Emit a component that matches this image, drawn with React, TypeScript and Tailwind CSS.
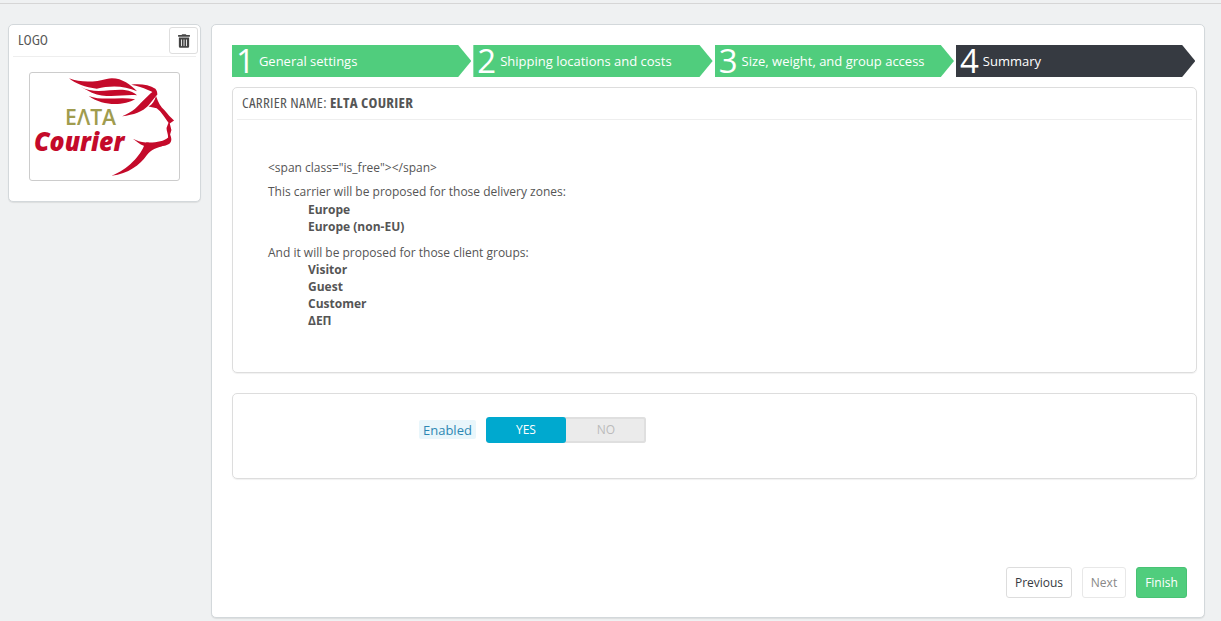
import * as React from "react";
import { FaTrashAlt } from "react-icons/fa";

const steps = [
  { num: "1", label: "General settings", done: true },
  { num: "2", label: "Shipping locations and costs", done: true },
  { num: "3", label: "Size, weight, and group access", done: true },
  { num: "4", label: "Summary", done: false },
];

const zones = ["Europe", "Europe (non-EU)"];
const groups = ["Visitor", "Guest", "Customer", "ΔΕΠ"];

const EltaLogo = () => (
  <svg viewBox="12 12 453 327" className="block w-full h-full">
    <g fill="#c40a2a">
      <path d="M130 28 C165 42 210 40 245 30 C285 22 315 45 338 68 C300 50 255 50 215 60 C180 55 150 45 130 28 Z" />
      <path d="M165 54 C205 78 260 60 300 64 C318 66 330 72 338 80 C295 76 250 92 200 72 Z" />
      <path d="M190 82 C230 98 285 84 332 92 C300 110 238 116 190 82 Z" />
      <path d="M320 48 C345 44 375 48 394 60 C398 65 400 70 400 78 C385 70 360 56 320 48 Z" />
      <path d="M390 66 C375 76 366 88 350 103 C335 120 318 135 292 144 C328 140 355 130 372 112 C382 100 392 88 400 78 Z" />
      <path d="M396 82 C402 100 410 116 422 126 C432 138 440 148 451 157 L438 166 L443 186 L439 200 C446 216 444 228 427 233 C400 240 380 240 360 235 C345 230 335 220 325 213 C338 218 350 225 368 224 C395 225 420 221 433 209 C433 198 428 190 428 180 L434 164 C425 152 412 130 398 120 L373 114 C385 108 392 96 396 82 Z" />
      <path d="M360 233 C350 262 310 308 260 326 C312 320 347 292 367 264 C380 247 397 240 427 233 Z" />
    </g>
    <text x="118" y="170" fill="#a09c4e" fontFamily="'Open Sans', sans-serif" fontWeight="600" fontSize="64" textLength="156" lengthAdjust="spacingAndGlyphs">ΕΛΤΑ</text>
    <text x="23" y="250" fill="#c40a2a" fontFamily="'Open Sans', sans-serif" fontWeight="800" fontStyle="italic" fontSize="82" textLength="276" lengthAdjust="spacingAndGlyphs">Courier</text>
  </svg>
);

export default function App() {
  return (
    <div className="w-[1221px] h-[621px] overflow-hidden bg-[#eff1f2] text-[#555] font-['Open_Sans',sans-serif]">
      <div className="h-[4px] border-b border-[#d6d6d6]"></div>
      <div className="flex items-start gap-[10px] pl-[8px] pt-[20px]">
        <aside className="w-[193px] h-[178px] bg-white border border-[#d3d8db] rounded-[5px] shadow-[0_1px_1px_rgba(0,0,0,0.08)] px-[4px]">
          <div className="h-[32px] flex items-center justify-between border-b border-[#eeeeee]">
            <h3 className="pl-[5px] pb-[2px] text-[15px] text-[#555] [font-stretch:75%]">LOGO</h3>
            <button className="w-[29px] h-[27px] -mr-[2px] flex items-center justify-center border border-[#dedede] rounded-[3px] bg-white text-[#444]">
              <FaTrashAlt className="w-[12px] h-[14px]" />
            </button>
          </div>
          <div className="w-[151px] h-[109px] mt-[15px] ml-[16px] border border-[#cccccc] rounded-[3px] overflow-hidden">
            <EltaLogo />
          </div>
        </aside>

        <main className="w-[994px] h-[594px] bg-white border border-[#d3d8db] rounded-[5px] shadow-[0_1px_1px_rgba(0,0,0,0.08)] pl-[20px] pr-[8px] pt-[20px] flex flex-col">
          <ul className="flex gap-[2px]">
            {steps.map((s) => (
              <li
                key={s.num}
                className={`w-[239.33px] h-[32px] flex items-center pl-[4px] text-white [clip-path:polygon(0_0,94.5%_0,100%_50%,94.5%_100%,0_100%)] ${s.done ? "bg-[#50cd7d]" : "bg-[#363a41]"}`}
              >
                <span className="text-[33px] leading-[32px] mr-[4px]">{s.num}</span>
                <span className="text-[13px] pt-[2px]">{s.label}</span>
              </li>
            ))}
          </ul>

          <section className="w-[965px] h-[286px] mt-[10px] border border-[#dddddd] rounded-[5px] px-[4px] shadow-[0_1px_1px_rgba(0,0,0,0.06)]">
            <h3 className="h-[32px] flex items-center pl-[5px] pb-[2px] border-b border-[#eeeeee] text-[15px] tracking-[0.3px] text-[#555] [font-stretch:75%]">
              CARRIER NAME:&nbsp;<strong className="font-bold">ELTA COURIER</strong>
            </h3>
            <div className="pl-[31px] pt-[39px] text-[12px] leading-[17px]">
              <p className="mb-[7px]">&lt;span class="is_free"&gt;&lt;/span&gt;</p>
              <p>This carrier will be proposed for those delivery zones:</p>
              <ul className="pl-[40px] mt-[1px] mb-[9px] font-bold">
                {zones.map((z) => <li key={z}>{z}</li>)}
              </ul>
              <p>And it will be proposed for those client groups:</p>
              <ul className="pl-[40px] font-bold">
                {groups.map((g) => <li key={g}>{g}</li>)}
              </ul>
            </div>
          </section>

          <section className="w-[965px] h-[86px] mt-[20px] border border-[#dddddd] rounded-[5px] shadow-[0_1px_1px_rgba(0,0,0,0.06)] flex items-start pt-[23px] pl-[186px]">
            <span className="mt-[3px] px-[4px] h-[19px] leading-[21px] rounded-[2px] bg-[#e9f6fb] text-[#2e87b3] text-[13px]">Enabled</span>
            <div className="ml-[10px] flex h-[26px] w-[160px] text-[12px] rounded-[3px] overflow-hidden bg-[#ebebeb] shadow-[inset_0_0_0_2px_#dfdfdf]">
              <span className="w-[80px] flex items-center justify-center rounded-[3px] bg-[#00a9cf] text-white font-medium">YES</span>
              <span className="w-[80px] flex items-center justify-center text-[#bbbbbb]">NO</span>
            </div>
          </section>

          <div className="w-[955px] mt-[88px] flex justify-end gap-[10px] text-[12px]">
            <button className="h-[31px] w-[66px] border border-[#dddddd] rounded-[3px] bg-white text-[#363a41]">Previous</button>
            <button className="h-[31px] w-[44px] border border-[#e8e8e8] rounded-[3px] bg-white text-[#888]">Next</button>
            <button className="h-[31px] w-[51px] rounded-[3px] bg-[#50cd7d] border border-[#48c274] text-white">Finish</button>
          </div>
        </main>
      </div>
    </div>
  );
}
